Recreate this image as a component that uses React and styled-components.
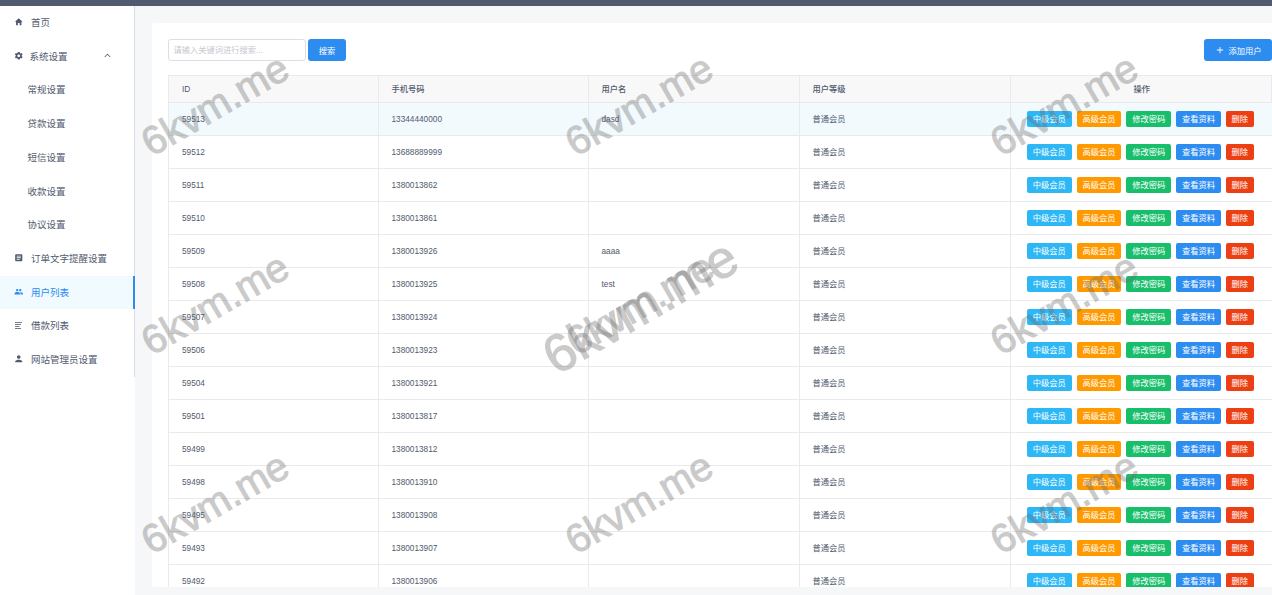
import React from 'react';
import styled, { createGlobalStyle } from 'styled-components';
import {
  IoMdHome,
  IoMdSettings,
  IoIosArrowUp,
  IoMdListBox,
  IoMdPeople,
  IoMdPerson,
  IoMdAdd,
} from 'react-icons/io';

const GlobalStyle = createGlobalStyle`
  html, body {
    margin: 0;
    height: 100%;
    overflow: hidden;
  }
  body {
    font-family: "Liberation Sans", "Noto Sans CJK SC", sans-serif;
    color: #515a6e;
  }
`;

const Page = styled.div`
  position: relative;
  width: 1272px;
  height: 595px;
  overflow: hidden;
  background: #f5f7f9;
  display: flex;
  flex-direction: column;
`;

const TopBar = styled.div`
  height: 6px;
  flex: none;
  background: #515a6e;
`;

const Body = styled.div`
  flex: 1;
  min-height: 0;
  display: flex;
`;

const Sidebar = styled.aside`
  width: 135px;
  flex: none;
  background: #fff;
`;

const Menu = styled.div`
  border-right: 1px solid #dcdee2;
`;

const MenuItem = styled.div`
  height: 33.7px;
  box-sizing: border-box;
  display: flex;
  align-items: center;
  padding-bottom: 1.5px;
  padding-left: ${(props) => (props.sub ? '27.5px' : '14px')};
  margin-right: ${(props) => (props.active ? '-1px' : '0')};
  font-size: 9.5px;
  color: ${(props) => (props.active ? '#2d8cf0' : '#515a6e')};
  background: ${(props) => (props.active ? '#f0faff' : 'transparent')};
  border-right: ${(props) => (props.active ? '2px solid #2d8cf0' : 'none')};
`;

const MenuIcon = styled.span`
  width: ${(props) => props.w || '17px'};
  flex: none;
  display: flex;
  align-items: center;
  font-size: 9.5px;
`;

const Chevron = styled(IoIosArrowUp)`
  margin-left: 35.5px;
  font-size: 9px;
`;

const BarsIcon = styled.svg`
  width: 8px;
  height: 7px;
  display: block;
  margin-left: 1px;
`;

const Main = styled.main`
  flex: 1;
  min-width: 0;
  padding: 17px 0 8px 17px;
  display: flex;
`;

const Card = styled.div`
  flex: 1;
  min-width: 0;
  background: #fff;
  padding: 16px 0 0 16px;
  overflow: hidden;
  border-radius: 3px 0 0 3px;
`;

const Toolbar = styled.div`
  display: flex;
  align-items: center;
  height: 22px;
  margin-bottom: 14px;
`;

const SearchInput = styled.input`
  width: 138px;
  height: 22px;
  box-sizing: border-box;
  border: 1px solid #dcdee2;
  border-radius: 3px;
  padding: 0 4.5px;
  font: 8.25px "Liberation Sans", "Noto Sans CJK SC", sans-serif;
  outline: none;
  &::placeholder {
    color: #c5c8ce;
    opacity: 1;
  }
`;

const ToolButton = styled.button`
  height: 22px;
  box-sizing: border-box;
  border: none;
  border-radius: 3px;
  background: #2d8cf0;
  color: #fff;
  font: 8.25px "Liberation Sans", "Noto Sans CJK SC", sans-serif;
  padding: 0;
  display: flex;
  align-items: center;
  justify-content: center;
  flex: none;
  width: ${(props) => props.w};
  margin-left: ${(props) => props.ml || '0'};
`;

const AddIcon = styled(IoMdAdd)`
  font-size: 10px;
  margin-right: 4px;
`;

const Table = styled.div`
  width: 1104px;
  border: solid #e8eaec;
  border-width: 1px 0 0 1px;
  box-sizing: border-box;
`;

const Row = styled.div`
  display: grid;
  grid-template-columns: 209.5px 210px 211px 211px 1fr;
  height: 33px;
  box-sizing: border-box;
  border-bottom: 1px solid #e8eaec;
  background: ${(props) => (props.hover ? '#f3fafe' : '#fff')};
`;

const HeadRow = styled(Row)`
  height: 27px;
  background: #f8f8f9;
`;

const Cell = styled.div`
  display: flex;
  align-items: center;
  padding-left: 13px;
  padding-bottom: ${(props) => (props.cjk ? '2px' : '0')};
  font-size: 8.25px;
  color: #515a6e;
  border-right: 1px solid #e8eaec;
  min-width: 0;
  white-space: nowrap;
`;

const HeadCell = styled(Cell)`
  font-weight: 500;
`;

const ActionHead = styled(HeadCell)`
  justify-content: center;
  padding-left: 2px;
`;

const ActionCell = styled(Cell)`
  gap: 5px;
  padding-left: 16.5px;
  padding-bottom: 1px;
  border-right: none;
`;

const ActionButton = styled.button`
  height: 16px;
  width: ${(props) => props.w || '44.7px'};
  flex: none;
  box-sizing: border-box;
  border: none;
  border-radius: 2px;
  padding: 0 0 1px;
  color: #fff;
  background: ${(props) => props.color};
  font: 8.25px "Liberation Sans", "Noto Sans CJK SC", sans-serif;
  text-align: center;
`;

const WatermarkLayer = styled.div`
  position: absolute;
  inset: 0;
  pointer-events: none;
`;

const Watermark = styled.div`
  position: absolute;
  left: ${(props) => props.x}px;
  top: ${(props) => props.y}px;
  transform: translate(-50%, -50%) rotate(-30deg);
  font-size: ${(props) => props.size || 40}px;
  font-family: "Liberation Sans", sans-serif;
  white-space: nowrap;
  color: #6e6e6e;
  -webkit-text-stroke: 1px #6e6e6e;
  opacity: 0.36;
`;

const menu = [
  { label: '首页', icon: <IoMdHome /> },
  { label: '系统设置', icon: <IoMdSettings />, w: '15.5px', open: true },
  { label: '常规设置', sub: true },
  { label: '贷款设置', sub: true },
  { label: '短信设置', sub: true },
  { label: '收款设置', sub: true },
  { label: '协议设置', sub: true },
  { label: '订单文字提醒设置', icon: <IoMdListBox /> },
  { label: '用户列表', icon: <IoMdPeople />, active: true },
  {
    label: '借款列表',
    icon: (
      <BarsIcon viewBox="0 0 8 7">
        <path d="M0 .5h7M0 2.5h6M0 4.5h4.5M0 6.5h6" stroke="currentColor" strokeWidth="0.8" />
      </BarsIcon>
    ),
  },
  { label: '网站管理员设置', icon: <IoMdPerson /> },
];

const users = [
  ['59513', '13344440000', 'dasd'],
  ['59512', '13688889999', ''],
  ['59511', '1380013862', ''],
  ['59510', '1380013861', ''],
  ['59509', '1380013926', 'aaaa'],
  ['59508', '1380013925', 'test'],
  ['59507', '1380013924', ''],
  ['59506', '1380013923', ''],
  ['59504', '1380013921', ''],
  ['59501', '1380013817', ''],
  ['59499', '1380013812', ''],
  ['59498', '1380013910', ''],
  ['59495', '1380013908', ''],
  ['59493', '1380013907', ''],
  ['59492', '1380013906', ''],
];

const actions = [
  { label: '中级会员', color: '#2db7f5' },
  { label: '高级会员', color: '#ff9900' },
  { label: '修改密码', color: '#19be6b' },
  { label: '查看资料', color: '#2d8cf0' },
  { label: '删除', color: '#ed3f14', w: '28px' },
];

const watermarks = [
  { x: 215, y: 105 },
  { x: 639, y: 105 },
  { x: 1064, y: 105 },
  { x: 215, y: 304 },
  { x: 640, y: 304 },
  { x: 640, y: 306, size: 53 },
  { x: 1064, y: 304 },
  { x: 215, y: 503 },
  { x: 639, y: 503 },
  { x: 1064, y: 503 },
];

function App() {
  return (
    <Page>
      <GlobalStyle />
      <TopBar />
      <Body>
        <Sidebar>
          <Menu>
            {menu.map((item) => (
              <MenuItem key={item.label} sub={item.sub} active={item.active}>
                {item.icon && <MenuIcon w={item.w}>{item.icon}</MenuIcon>}
                {item.label}
                {item.open && <Chevron />}
              </MenuItem>
            ))}
          </Menu>
        </Sidebar>
        <Main>
          <Card>
            <Toolbar>
              <SearchInput placeholder="请输入关键词进行搜索..." />
              <ToolButton w="38px" ml="2px">搜索</ToolButton>
              <ToolButton w="68px" ml="858px">
                <AddIcon />
                添加用户
              </ToolButton>
            </Toolbar>
            <Table>
              <HeadRow>
                <HeadCell>ID</HeadCell>
                <HeadCell cjk>手机号码</HeadCell>
                <HeadCell cjk>用户名</HeadCell>
                <HeadCell cjk>用户等级</HeadCell>
                <ActionHead cjk>操作</ActionHead>
              </HeadRow>
              {users.map(([id, phone, name], i) => (
                <Row key={id} hover={i === 0}>
                  <Cell>{id}</Cell>
                  <Cell>{phone}</Cell>
                  <Cell>{name}</Cell>
                  <Cell cjk>普通会员</Cell>
                  <ActionCell>
                    {actions.map((a) => (
                      <ActionButton key={a.label} color={a.color} w={a.w}>
                        {a.label}
                      </ActionButton>
                    ))}
                  </ActionCell>
                </Row>
              ))}
            </Table>
          </Card>
        </Main>
      </Body>
      <WatermarkLayer>
        {watermarks.map((m) => (
          <Watermark key={`${m.x}-${m.y}`} x={m.x} y={m.y} size={m.size}>
            6kvm.me
          </Watermark>
        ))}
      </WatermarkLayer>
    </Page>
  );
}

export default App;
